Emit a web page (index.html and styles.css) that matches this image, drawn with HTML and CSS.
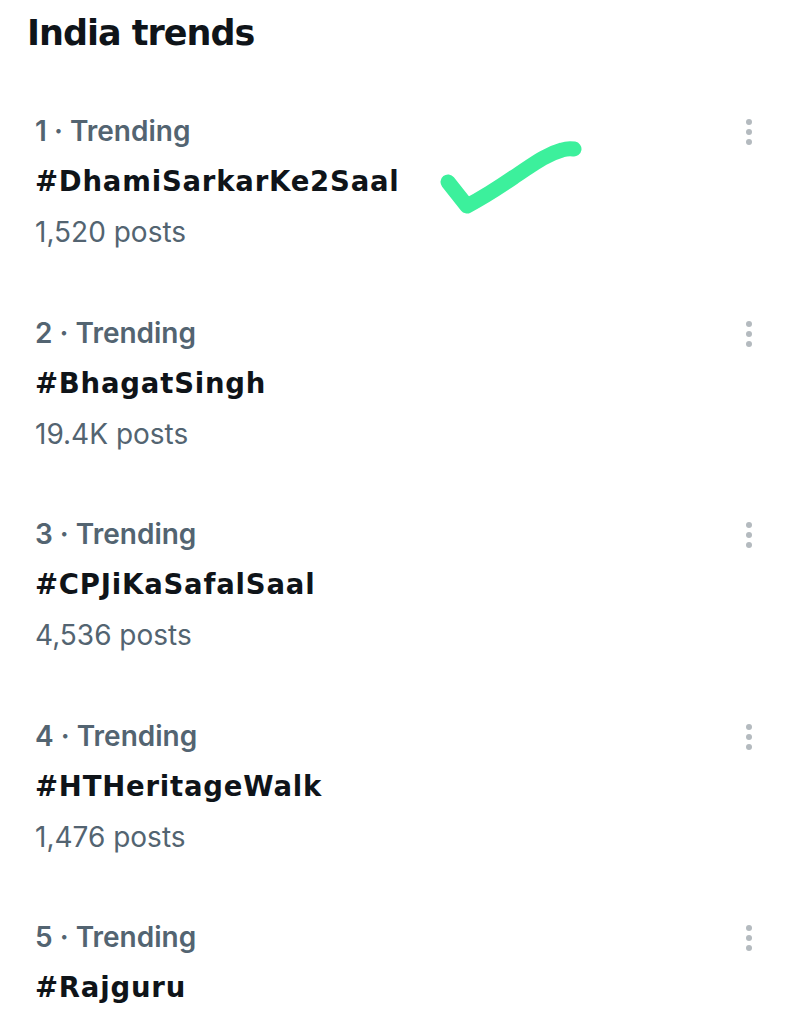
FILE: index.html
```html
<!DOCTYPE html>
<html>
<head>
<meta charset="utf-8">
<link rel="stylesheet" href="styles.css">
</head>
<body>
<main class="page">
  <h1 class="title">India trends</h1>
  <ul class="trends">
    <li class="trend">
      <div class="info">
        <div class="meta">1 · Trending</div>
        <div class="tag">#DhamiSarkarKe2Saal</div>
        <div class="count">1,520 posts</div>
      </div>
      <span class="more"><i></i><i></i><i></i></span>
      <svg class="check" width="150" height="90" viewBox="0 0 150 90">
        <path d="M12 45 L31 69 C50 59 62 51 78 40 C95 29 108 18 126 13 Q132 11 138 12" fill="none" stroke="#3cf09c" stroke-width="15" stroke-linecap="round" stroke-linejoin="round"/>
      </svg>
    </li>
    <li class="trend">
      <div class="info">
        <div class="meta">2 · Trending</div>
        <div class="tag">#BhagatSingh</div>
        <div class="count">19.4K posts</div>
      </div>
      <span class="more"><i></i><i></i><i></i></span>
    </li>
    <li class="trend">
      <div class="info">
        <div class="meta">3 · Trending</div>
        <div class="tag">#CPJiKaSafalSaal</div>
        <div class="count">4,536 posts</div>
      </div>
      <span class="more"><i></i><i></i><i></i></span>
    </li>
    <li class="trend">
      <div class="info">
        <div class="meta">4 · Trending</div>
        <div class="tag">#HTHeritageWalk</div>
        <div class="count">1,476 posts</div>
      </div>
      <span class="more"><i></i><i></i><i></i></span>
    </li>
    <li class="trend">
      <div class="info">
        <div class="meta">5 · Trending</div>
        <div class="tag">#Rajguru</div>
        <div class="count">1,204 posts</div>
      </div>
      <span class="more"><i></i><i></i><i></i></span>
    </li>
  </ul>
</main>
</body>
</html>
```
FILE: styles.css
```css
html, body {
  margin: 0;
  padding: 0;
  background: #ffffff;
  overflow: hidden;
}
.page {
  width: 794px;
  height: 1024px;
  overflow: hidden;
  font-family: Inter, "Liberation Sans", sans-serif;
  color: #0f1419;
}
.title {
  margin: 0;
  padding: 9px 0 0 27px;
  height: 79px;
  box-sizing: border-box;
  font-family: "DejaVu Sans", Inter, sans-serif;
  font-size: 35px;
  line-height: 48px;
  font-weight: 700;
  letter-spacing: -1px;
}
.trends {
  list-style: none;
  margin: 0;
  padding: 0;
}
.trend {
  position: relative;
  display: flex;
  justify-content: space-between;
  align-items: flex-start;
  padding: 27px 42px 25px 35px;
  height: 201.5px;
  box-sizing: border-box;
}
.info {
  display: flex;
  flex-direction: column;
}
.meta {
  font-size: 28px;
  line-height: 50px;
  font-weight: 600;
  color: #536471;
}
.tag {
  font-family: "DejaVu Sans", Inter, sans-serif;
  font-size: 27.5px;
  line-height: 51px;
  font-weight: 700;
  letter-spacing: 0.8px;
  color: #0f1419;
}
.count {
  font-size: 28px;
  line-height: 50px;
  font-weight: 400;
  color: #536471;
}
.more {
  display: flex;
  flex-direction: column;
  gap: 4px;
  margin-top: 13px;
}
.more i {
  display: block;
  width: 6px;
  height: 6px;
  border-radius: 50%;
  background: #b4babf;
}
.check {
  position: absolute;
  left: 436px;
  top: 58px;
}
```
